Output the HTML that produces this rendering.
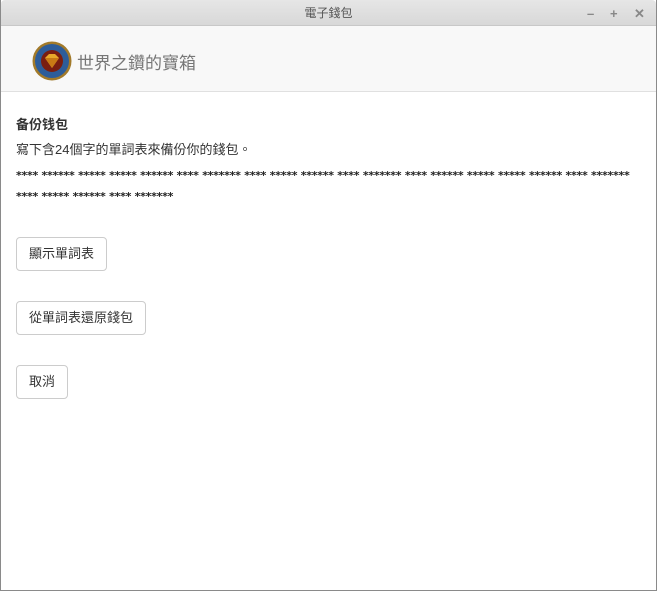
<!DOCTYPE html>
<html><head><meta charset="utf-8"><style>
*{margin:0;padding:0;box-sizing:border-box}
body{width:657px;height:591px;overflow:hidden;background:#fff;font-family:"Liberation Sans","Noto Sans CJK TC",sans-serif;color:#333}
.win{position:absolute;left:0;top:0;width:657px;height:591px;border:1px solid #8a8a8a;border-top:none;background:#fff}
.title{position:absolute;left:0;top:0;width:655px;height:26px;background:linear-gradient(#e6e6e6,#d8d8d8);border-bottom:1px solid #c8c8c8;border-radius:4px 4px 0 0;text-align:center;font-size:12px;line-height:27px;color:#555}
.ctl{position:absolute;top:0;font-size:13px;color:#888;font-weight:bold;line-height:27px}
.hdr{position:absolute;left:0;top:26px;width:655px;height:66px;background:#f8f8f8;border-bottom:1px solid #e0e0e0}
.brand{position:absolute;left:76px;top:23px;font-size:17px;color:#777}
.logo{position:absolute;left:31px;top:15px;width:40px;height:40px}
.c{position:absolute;left:15px}
h4{font-size:13px;font-weight:bold;color:#333}
.btn{position:absolute;left:15px;height:34px;border:1px solid #ccc;border-radius:4px;background:#fff;font-size:13px;line-height:32px;padding:0 12px;color:#333}
.stars{font-family:"DejaVu Sans",sans-serif;font-size:11px;font-weight:bold;line-height:21px;color:#222;white-space:nowrap;letter-spacing:-0.26px}
</style></head><body>
<div class="win">
<div class="title">電子錢包
<span class="ctl" style="left:586px">–</span><span class="ctl" style="left:609px">+</span><span class="ctl" style="left:633px">✕</span></div>
<div class="hdr">
<svg class="logo" viewBox="0 0 40 40"><circle cx="20" cy="20" r="19.5" fill="#a27a2a"/><circle cx="20" cy="20" r="17" fill="#2d5d9a"/><circle cx="20" cy="20" r="11" fill="#7a1e10"/><polygon points="13,17 17,13 23,13 27,17 20,27" fill="#e8a82a"/><polygon points="13,17 27,17 20,27" fill="#c97a15"/></svg>
<div class="brand">世界之鑽的寶箱</div>
</div>
<div class="c" style="top:114px"><h4>备份钱包</h4></div>
<div class="c" style="top:139px;font-size:13px">寫下含24個字的單詞表來備份你的錢包。</div>
<div class="c stars" style="top:165px">**** ****** ***** ***** ****** **** ******* **** ***** ****** **** ******* **** ****** ***** ***** ****** **** *******<br>**** ***** ****** **** *******</div>
<div class="btn" style="top:237px">顯示單詞表</div>
<div class="btn" style="top:301px">從單詞表還原錢包</div>
<div class="btn" style="top:365px">取消</div>
</div>
</body></html>
